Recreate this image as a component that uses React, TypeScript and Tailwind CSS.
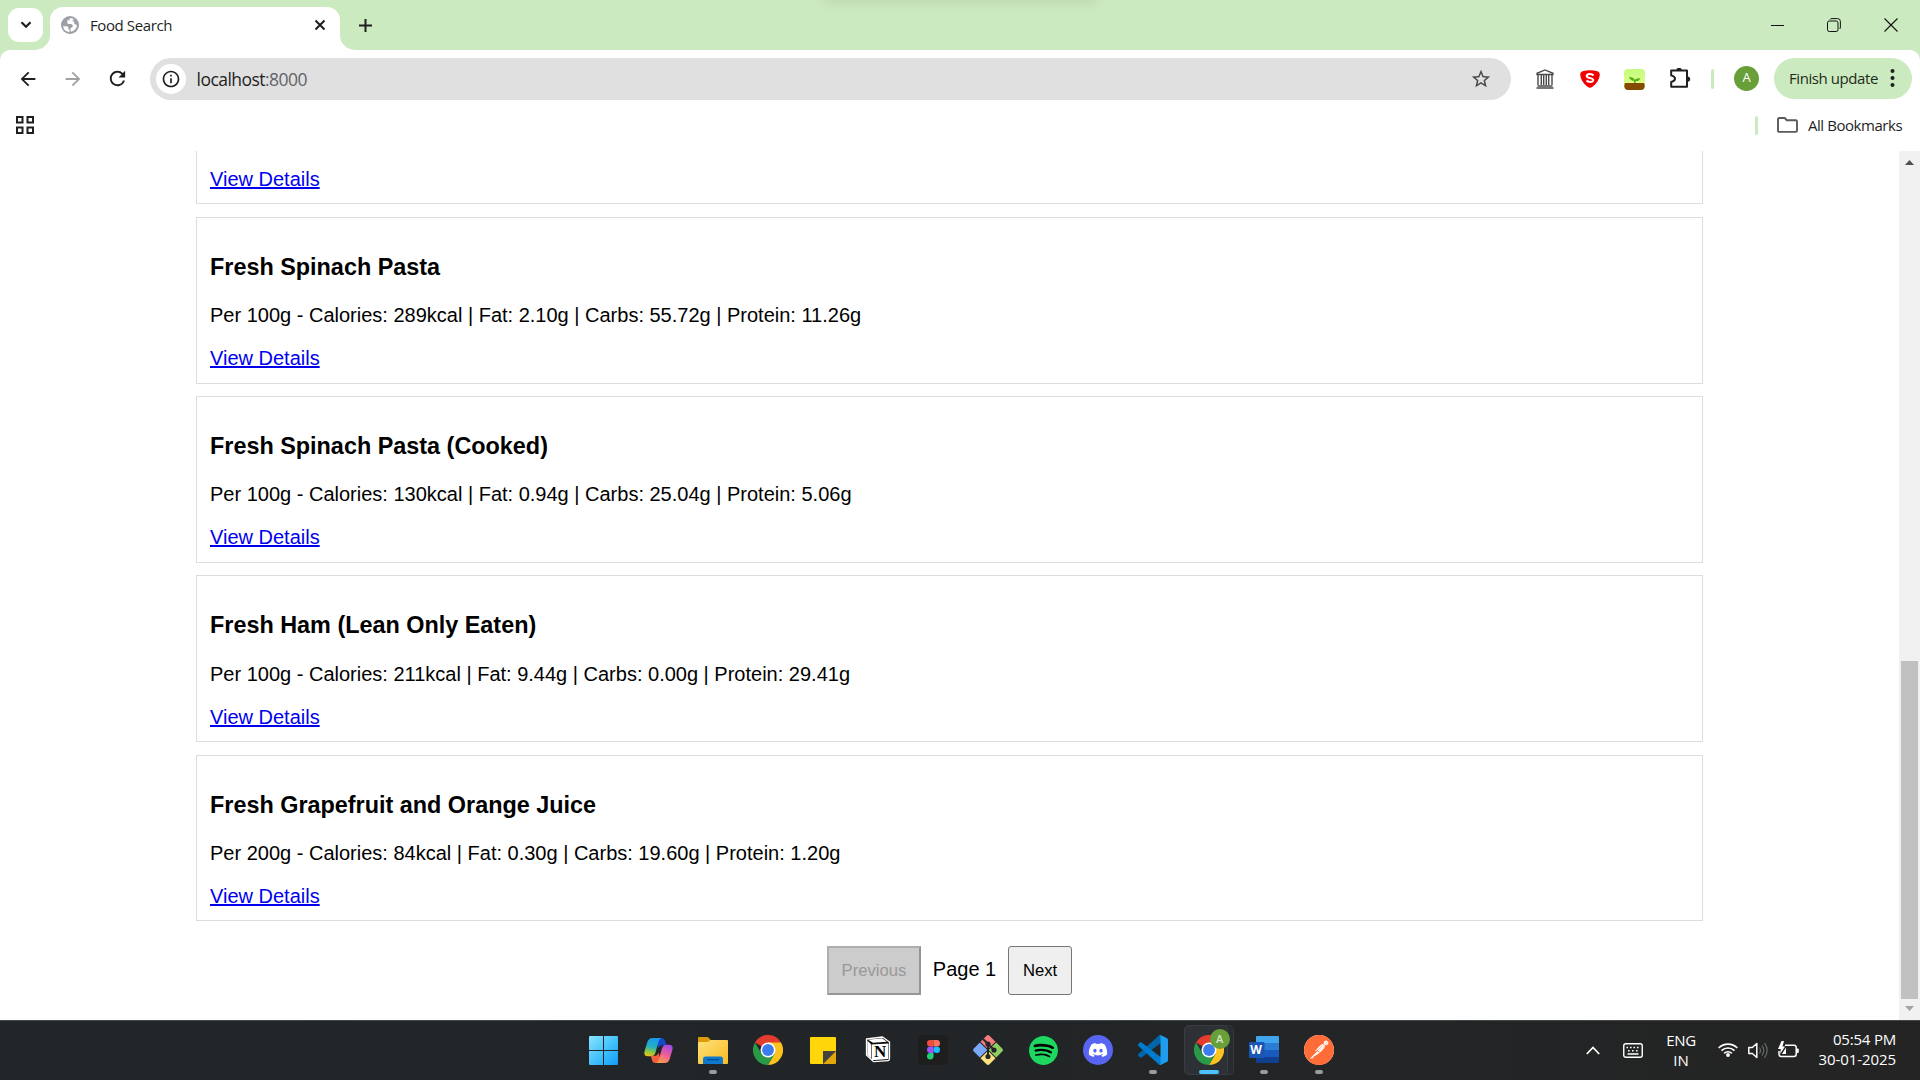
import React from "react";
import {
  MdArrowBack,
  MdArrowForward,
  MdRefresh,
  MdStarBorder,
  MdInfoOutline,
} from "react-icons/md";
import { SiSpotify, SiPostman } from "react-icons/si";
import { FaDiscord } from "react-icons/fa";

const foods = [
  { name: "Fresh Spinach Pasta", info: "Per 100g - Calories: 289kcal | Fat: 2.10g | Carbs: 55.72g | Protein: 11.26g" },
  { name: "Fresh Spinach Pasta (Cooked)", info: "Per 100g - Calories: 130kcal | Fat: 0.94g | Carbs: 25.04g | Protein: 5.06g" },
  { name: "Fresh Ham (Lean Only Eaten)", info: "Per 100g - Calories: 211kcal | Fat: 9.44g | Carbs: 0.00g | Protein: 29.41g" },
  { name: "Fresh Grapefruit and Orange Juice", info: "Per 200g - Calories: 84kcal | Fat: 0.30g | Carbs: 19.60g | Protein: 1.20g" },
];

function TabStrip() {
  return (
    <div className="relative flex h-[50px] shrink-0 bg-[#cbeabf] overflow-hidden">
      <div className="absolute left-[828px] -top-[10px] h-[8px] w-[266px] shadow-[0_2px_12px_2px_rgba(110,100,70,0.16)]" />
      <div className="ml-2 mt-2 flex h-[34px] w-[35px] items-center justify-center rounded-[11px] bg-white">
        <svg width="12" height="8" viewBox="0 0 12 8" fill="none" stroke="#1f1f1f" strokeWidth="2.200">
          <path d="M1.500 1.300 6 5.800l4.500-4.500" />
        </svg>
      </div>
      <div className="flex h-[50px] items-end">
        <svg className="-ml-[8px]" width="15" height="15" viewBox="0 0 15 15">
          <path d="M15 0v15H0A15 15 0 0 0 15 0z" fill="#fff" />
        </svg>
        <div className="flex h-[43px] w-[290px] items-center rounded-t-[13px] bg-white pb-[7px] pl-[11px] pr-[14px]">
          <svg width="18" height="18" viewBox="0 0 18 18">
            <circle cx="9" cy="9" r="9" fill="#9aa0a6" />
            <path d="M2 10.200h3.500c1.200 0 2 .9 2 2v1.300h1v2.600A7.200 7.200 0 0 1 2 10.200zM9.500 2c-1 .3-1 1.500-1 2.300H6.300v2.200c0 .9.800 1.500 1.800 1.500h1.500c1.400 0 2.200.9 2.200 2 0 1.200-1 1.900-2.400 1.900l.3 3.900c3.400-.6 6-3.300 6.300-6.500-.6-.7-1.600-1-2.700-1v-1.500c0-1-.8-1.700-1.900-1.700V4.500L13 3.300A7.200 7.200 0 0 0 9.500 2z" fill="#fff" />
          </svg>
          <span className="ml-[11px] flex-1 text-[15px] leading-[20px] tracking-[-0.400px] text-[#1f1f1f]">Food Search</span>
          <svg width="12" height="12" viewBox="0 0 12 12" stroke="#1f1f1f" strokeWidth="2">
            <path d="M1.500 1.500l9 9M10.500 1.500l-9 9" />
          </svg>
        </div>
        <svg width="15" height="15" viewBox="0 0 15 15">
          <path d="M0 0v15h15A15 15 0 0 1 0 0z" fill="#fff" />
        </svg>
      </div>
      <svg className="ml-[4px] mt-[19px]" width="13" height="13" viewBox="0 0 13 13" stroke="#1f1f1f" strokeWidth="2">
        <path d="M6.500 0v13M0 6.500h13" />
      </svg>
      <div className="ml-auto mr-[22px] flex h-[49px] items-center gap-[43px]">
        <svg width="13" height="14" viewBox="0 0 13 14">
          <path d="M0 7h13" stroke="#111" strokeWidth="1" shapeRendering="crispEdges" />
        </svg>
        <svg width="14" height="14" viewBox="0 0 14 14" fill="none" stroke="#111" strokeWidth="1">
          <rect x="0.500" y="3" width="10.500" height="10.500" rx="1.800" />
          <path d="M3 1.500 Q3.300.600 5 .600H10.500Q13.400.600 13.400 3.500V9Q13.400 10.600 12.500 11" />
        </svg>
        <svg width="14" height="14" viewBox="0 0 14 14" stroke="#111" strokeWidth="1.100">
          <path d="M.500.500l13 13M13.500.500l-13 13" />
        </svg>
      </div>
    </div>
  );
}

function Extensions() {
  return (
    <>
      <div className="flex w-[45px] justify-center">
        <svg width="18" height="20" viewBox="0 0 18 20" fill="none" stroke="#4a4a4a">
          <path d="M1 5.500V4.300L9 1l8 3.300v1.200z" strokeWidth="1.300" />
          <path d="M2 6v10M5.300 6v10M7.700 6v10M10.300 6v10M12.700 6v10M16 6v10" strokeWidth="1.400" />
          <path d="M1.500 17h15M.500 19h17" strokeWidth="1.500" />
        </svg>
      </div>
      <div className="flex w-[45px] justify-center">
        <svg width="20" height="18" viewBox="0 0 20 18">
          <path d="M2.500 1.300Q10-.9 17.500 1.300 20 2.200 19.800 5 19 12 12.500 16.800q-2.500 2-5 0Q1 12 .2 5 0 2.200 2.500 1.300z" fill="#f00000" />
          <path d="M13.500 5.500C12 3.800 7.500 3.300 6.700 5.600 6.200 8.600 13.500 7.600 13.200 10.200 12.700 12.600 8 12.200 6.500 10.500" fill="none" stroke="#fff" strokeWidth="2" />
        </svg>
      </div>
      <div className="flex w-[45px] justify-center">
        <svg width="21" height="21" viewBox="0 0 21 21">
          <defs>
            <linearGradient id="sky" x1="0" y1="0" x2="0" y2="1">
              <stop offset="0" stopColor="#c4fb7c" />
              <stop offset="1" stopColor="#e2ff8c" />
            </linearGradient>
          </defs>
          <rect width="21" height="19" rx="4" fill="url(#sky)" />
          <path d="M1 14h19q1.500 3 0 5.500-1 1.500-3 1.500H4q-2 0-3-1.500-1.500-2.500 0-5.500z" fill="#854b00" />
          <path d="M10 14v-2Q6 11.500 5 8q4.500-.2 5.500 2.800 1.500-2 6-1.600-1.300 3.200-5 3V14z" fill="#59ad16" />
        </svg>
      </div>
      <div className="flex w-[45px] justify-center">
        <svg className="translate-x-px -translate-y-px" width="21" height="20" viewBox="0 0 21 20">
          <path d="M1.200 2.600H17V18.700H1.200V14Q5 13 5 10.700 5 8.400 1.200 7.400z" fill="none" stroke="#1f1f1f" strokeWidth="2" strokeLinejoin="round" />
          <path d="M6.400 2.200a2.700 2.400 0 0 1 5.400 0zM17.500 8.400a2.700 2.700 0 0 1 0 5.400z" fill="#1f1f1f" />
        </svg>
      </div>
    </>
  );
}

function Toolbar() {
  return (
    <div className="shrink-0 bg-[#cbeabf]">
      <div className="flex h-[58px] items-center rounded-t-[10px] bg-white text-[#1f1f1f]">
        <MdArrowBack className="ml-[16.500px]" size={22} />
        <MdArrowForward className="ml-[23px] text-[#a0a0a0]" size={22} />
        <MdRefresh className="ml-[22px] -translate-y-px" size={23} />
        <div className="ml-[21px] flex h-[42px] w-[1361px] items-center rounded-full bg-[#e0e0e0] pl-[6px] pr-[19px]">
          <div className="flex size-[30px] items-center justify-center rounded-full bg-white">
            <MdInfoOutline size={20} />
          </div>
          <span className="ml-[11px] flex-1 text-[17.500px] leading-[24px] tracking-[-0.530px]">
            localhost<span className="text-[#5f6368]">:8000</span>
          </span>
          <MdStarBorder size={22} className="text-[#474747]" />
        </div>
        <div className="ml-[11.500px] flex items-center">
          <Extensions />
        </div>
        <div className="ml-[9px] h-5 w-[3px] rounded-full bg-[#cbeabf]" />
        <div className="ml-5 flex size-[25px] -translate-y-px items-center justify-center rounded-full bg-[#689f38] text-[13px] text-white">A</div>
        <div className="ml-[15px] flex h-[41px] w-[138px] -translate-y-px items-center rounded-full bg-[#cbeabf] pl-[15px]">
          <span className="w-[98px] whitespace-nowrap text-[15px] leading-[20px] tracking-[-0.420px] text-[#1f2a1a]">Finish update</span>
          <svg width="10" height="20" viewBox="0 0 10 20" fill="#1f1f1f">
            <circle cx="5.500" cy="3" r="2" />
            <circle cx="5.500" cy="10" r="2" />
            <circle cx="5.500" cy="17" r="2" />
          </svg>
        </div>
      </div>
      <div className="flex h-[43px] items-center bg-white pb-[9px]">
        <svg className="ml-[16px]" width="18" height="18" viewBox="0 0 18 18" fill="none" stroke="#1f1f1f" strokeWidth="2">
          <path d="M1 1h5.500v5.500H1zM11.500 1H17v5.500h-5.500zM1 11.500h5.500V17H1zM11.500 11.500H17V17h-5.500z" />
        </svg>
        <div className="ml-auto h-[19px] w-[3px] rounded-full bg-[#cbeabf]" />
        <svg className="ml-[19px]" width="21" height="16" viewBox="0 0 21 16" fill="none" stroke="#5a5a5a" strokeWidth="1.900">
          <path d="M1 13.500V2.300Q1 1 2.300 1H7.700L9.800 3.200H18.700Q20 3.200 20 4.500V13.500Q20 14.900 18.700 14.900H2.300Q1 14.900 1 13.500z" />
        </svg>
        <span className="ml-[10px] w-[112px] whitespace-nowrap text-[15px] leading-[20px] tracking-[-0.450px] text-[#1f1f1f]">All Bookmarks</span>
      </div>
    </div>
  );
}

function Details() {
  return (
    <a className="text-[20px] leading-[23px] text-[#0000ee] underline" href="#">
      View Details
    </a>
  );
}

function Page() {
  return (
    <div className="flex h-[869px] shrink-0 overflow-hidden bg-white font-['Liberation_Sans',Arial,sans-serif] text-black">
      <main className="ml-[196px] flex w-[1507px] flex-col">
        <div className="mb-[12.500px] flex h-[53.400px] shrink-0 flex-col border-x border-b border-[#dddddd] pl-[13px] pt-[16.750px]">
          <Details />
        </div>
        {foods.map((f) => (
          <div key={f.name} className="mb-[12.500px] flex h-[166.750px] shrink-0 flex-col border border-[#dddddd] pl-[13px] pt-[35.900px]">
            <h3 className="mb-[23.250px] text-[23.400px] font-bold leading-[27px]">{f.name}</h3>
            <p className="mb-5 text-[20px] leading-[23px]">{f.info}</p>
            <Details />
          </div>
        ))}
        <div className="mt-[12.100px] flex items-center justify-center">
          <button className="h-[49px] w-[94px] border-2 border-b-[#969696] border-l-[#afafaf] border-r-[#969696] border-t-[#afafaf] bg-[#cccccc] text-[16.670px] text-[#999999]" disabled>
            Previous
          </button>
          <span className="w-[87px] pb-[2px] text-center text-[20px] leading-[23px]">Page 1</span>
          <button className="h-[49px] w-[64px] rounded-[3px] border border-[#767676] bg-[#efefef] text-[16.670px]">Next</button>
        </div>
      </main>
      <div className="ml-auto flex w-[21px] flex-col items-center bg-[#f1f1f1]">
        <svg className="mt-[9px]" width="9" height="5" viewBox="0 0 9 5">
          <path d="M0 5 4.500 0 9 5z" fill="#505050" />
        </svg>
        <div className="mt-[496px] h-[338px] w-[17px] bg-[#c1c1c1]" />
        <svg className="mt-[7px]" width="9" height="5" viewBox="0 0 9 5">
          <path d="M0 0h9L4.500 5z" fill="#a3a3a3" />
        </svg>
      </div>
    </div>
  );
}

function Chrome() {
  return (
    <svg width="30" height="30" viewBox="0 0 48 48">
      <path d="M24 24 3.200 12A24 24 0 0 1 44.800 12z" fill="#e33b2e" />
      <path d="M24 12H44.800A24 24 0 0 1 24 48L34.400 30z" fill="#fcc31e" />
      <path d="M13.600 30 3.200 12A24 24 0 0 0 24 48L34.400 30z" fill="#2a9a48" />
      <circle cx="24" cy="24" r="12" fill="#fff" />
      <circle cx="24" cy="24" r="9.500" fill="#3b7ded" />
    </svg>
  );
}

const WindowsLogo = () => (
  <svg width="29" height="29" viewBox="0 0 29 29">
    <defs>
      <linearGradient id="win" x1="0" y1="0" x2="1" y2="1">
        <stop offset="0" stopColor="#8be3ff" />
        <stop offset="0.500" stopColor="#46c4fb" />
        <stop offset="1" stopColor="#0f9af5" />
      </linearGradient>
    </defs>
    <path d="M1 0h13v14H0V1q0-1 1-1zM15 0h13q1 0 1 1v13H15zM0 15h14v14H1q-1 0-1-1zM15 15h14v13q0 1-1 1H15z" fill="url(#win)" />
  </svg>
);

const Copilot = () => (
  <svg width="29" height="27" viewBox="0 0 30 28">
    <defs>
      <linearGradient id="cpa" x1="0.400" y1="0" x2="0.200" y2="1">
        <stop offset="0" stopColor="#1a9bea" />
        <stop offset="0.450" stopColor="#21b0c4" />
        <stop offset="0.750" stopColor="#8fc63f" />
        <stop offset="1" stopColor="#f2c211" />
      </linearGradient>
      <linearGradient id="cpb" x1="0.700" y1="0" x2="0.300" y2="1">
        <stop offset="0" stopColor="#a04be8" />
        <stop offset="0.500" stopColor="#ee5c9c" />
        <stop offset="1" stopColor="#fb9a4b" />
      </linearGradient>
    </defs>
    <path d="M12 1h6q3 0 4 3l1.200 4.500H19q-3 0-4 3z" fill="#1747c9" />
    <path d="M8.500 1H18q-2 .5-3 4l-3 10.500q-1 4.500-5 4.500H4q-4.500 0-3.500-5L3.500 5Q5 1 8.500 1z" fill="url(#cpa)" />
    <path d="M7 19.500h4q3 0 4-3.500L17.500 25q-1 2-4.500 2h-1.500q-2.300 0-3-2.500z" fill="#f0603e" />
    <path d="M21.500 27H12.500q2-.5 3-4L18.500 12.500q1-4.500 5-4.500H26q4.500 0 3.500 5L26.500 23q-1.500 4-5 4z" fill="url(#cpb)" />
  </svg>
);

const Explorer = () => (
  <svg width="30" height="27" viewBox="0 0 30 27">
    <defs>
      <linearGradient id="fol" x1="0" y1="0" x2="1" y2="1">
        <stop offset="0" stopColor="#ffe07a" />
        <stop offset="1" stopColor="#f9bd22" />
      </linearGradient>
    </defs>
    <path d="M1 0h8q1 0 2 1l2 2.500H29q1 0 1 1V10H0V1q0-1 1-1z" fill="#dd9b0b" />
    <path d="M0 6Q0 5 1 5h8.500l3-2H29q1 0 1 1v22q0 1-1 1H1q-1 0-1-1z" fill="url(#fol)" />
    <path d="M5 27v-5q0-2.500 2.500-2.500h15q2.500 0 2.500 2.500v5z" fill="#0f78cc" />
    <path d="M9 22.700h12" stroke="#084a8c" strokeWidth="1.200" />
  </svg>
);

const Notes = () => (
  <svg width="26" height="27" viewBox="0 0 26 27">
    <path d="M1 0h24q1 0 1 1v13L13 27H1q-1 0-1-1V1q0-1 1-1z" fill="#ffd60a" />
    <path d="M26 14v12q0 1-1 1H13z" fill="#e0a80a" />
    <path d="M13 14h13L13 27z" fill="#44423d" />
  </svg>
);

const Notion = () => (
  <div className="relative flex h-[28px] w-[26px] items-center justify-center">
    <svg className="absolute left-0 top-0" width="26" height="27" viewBox="0 0 26 27">
      <path d="M1.500 3 17.500 1 24.500 6V22.500Q24.500 24.500 23 24.600L8.500 25.600 1.500 19z" fill="#0c0c0c" stroke="#fff" strokeWidth="1.300" strokeLinejoin="round" />
      <path d="M3 3.800 17 2.300 22 5.800 8 6.800zM6.600 8.600 23.400 7.400V23L6.600 24.200z" fill="#fff" />
      <path d="M2.300 4.500 6 8.300V22.500L2.300 18.700z" fill="#fff" />
    </svg>
    <span className="absolute left-[6px] top-[8px] w-[18px] text-center font-['Liberation_Serif',serif] text-[17px] font-bold leading-[16px] text-black">N</span>
  </div>
);

const Figma = () => (
  <div className="flex size-[30px] items-center justify-center rounded-[4px] bg-[#1e1e1e]">
    <svg width="13" height="20" viewBox="0 0 26 40">
      <path d="M6.500 0H13v13H6.500a6.500 6.500 0 0 1 0-13z" fill="#f24e3e" />
      <path d="M13 0h6.500a6.500 6.500 0 0 1 0 13H13z" fill="#ff7262" />
      <path d="M6.500 13H13v13H6.500a6.500 6.500 0 0 1 0-13z" fill="#9b55fa" />
      <circle cx="19.500" cy="19.500" r="6.500" fill="#1abcfe" />
      <path d="M6.500 26H13v6.500A6.500 6.500 0 1 1 6.500 26z" fill="#1fce75" />
    </svg>
  </div>
);

const Git = () => (
  <svg width="30" height="30" viewBox="0 0 30 30">
    <path d="M13.500.8q1.500-1.500 3 0l6 6-7.500 7.500-7.500-7.500z" fill="#f47c7c" />
    <path d="M23.200 7.500l6 6q1.500 1.500 0 3l-6 6L15.700 15z" fill="#8ecf5f" />
    <path d="M6.800 7.500 14.300 15l-7.500 7.500-6-6q-1.500-1.500 0-3z" fill="#7aa8f5" />
    <path d="M15 15.700l7.500 7.500-6 6q-1.500 1.500-3 0l-6-6z" fill="#fbe07c" />
    <g stroke="#24252a" strokeWidth="2" fill="#24252a">
      <path d="M10 4l5 5v12M15 9l6 6" fill="none" />
      <circle cx="15" cy="9" r="1.600" />
      <circle cx="21" cy="15" r="1.600" />
      <circle cx="15" cy="21.500" r="1.600" />
    </g>
  </svg>
);

const Spotify = () => (
  <div className="flex size-[29px] items-center justify-center rounded-full bg-black">
    <SiSpotify size={29} className="text-[#1ed760]" />
  </div>
);

const Discord = () => (
  <div className="flex size-[30px] items-center justify-center rounded-full bg-[#5865f2]">
    <FaDiscord size={20} className="text-white" />
  </div>
);

const Code = () => (
  <svg width="30" height="30" viewBox="0 0 100 100">
    <path d="M96.500 10.800 75.900.9a6.200 6.200 0 0 0-7.100 1.200L1.300 63.600a4.200 4.200 0 0 0 0 6.200l5.500 5a4.200 4.200 0 0 0 5.300.2l81.200-61.600c2.700-2 6.700-.1 6.700 3.300v-.2c0-2.400-1.400-4.600-3.500-5.700z" fill="#0065a9" />
    <path d="M96.500 89.200l-20.600 9.900a6.200 6.200 0 0 1-7.100-1.200L1.300 36.400a4.200 4.200 0 0 1 0-6.200l5.500-5a4.200 4.200 0 0 1 5.300-.2l81.200 61.600c2.700 2 6.700.1 6.700-3.300v.2c0 2.400-1.400 4.600-3.500 5.700z" fill="#007acc" />
    <path d="M75.900 99.100a6.200 6.200 0 0 1-7.100-1.200c2.300 2.300 6.200.7 6.200-2.600V4.700c0-3.300-3.900-4.900-6.200-2.600A6.200 6.200 0 0 1 75.900.9l20.600 9.900c2.100 1.100 3.500 3.300 3.500 5.700v67c0 2.400-1.400 4.600-3.500 5.700z" fill="#1f9cf0" />
  </svg>
);

const ActiveChrome = () => (
  <div className="relative flex h-[50px] w-[50px] items-center justify-center">
    <div className="absolute left-0 top-0 h-[50px] w-[50px] rounded-[5px] border border-[#34383c] bg-[#282c30]" />
    <div className="absolute left-0 top-0 h-[50px] w-[44px] rounded-[5px] border border-[#393d42] bg-[#2d3136]" />
    <div className="relative flex">
      <Chrome />
    </div>
    <div className="absolute left-[26px] top-[4px] flex size-[20px] items-center justify-center rounded-full bg-[#689f38] text-[11px] font-semibold text-[#d7e6c8]">A</div>
  </div>
);

const Word = () => (
  <div className="relative flex h-[28px] w-[30px]">
    <svg width="30" height="28" viewBox="0 0 30 28">
      <path d="M7 1q0-1 1-1h21q1 0 1 1v6H7z" fill="#41a5ee" />
      <path d="M7 7h23v7H7z" fill="#2b7cd3" />
      <path d="M7 14h23v7H7z" fill="#185abd" />
      <path d="M7 21h23v5q0 1-1 1H8q-1 0-1-1z" fill="#103f91" />
      <rect y="6" width="15.500" height="16" rx="1.300" fill="#1a55b5" />
    </svg>
    <span className="absolute left-0 top-[6px] w-[15px] text-center text-[12px] font-bold leading-[16px] text-white">W</span>
  </div>
);

const Postman = () => (
  <div className="flex size-[30px] items-center justify-center rounded-full bg-white">
    <SiPostman size={30} className="text-[#ff6c37]" />
  </div>
);

const apps: { Icon: () => React.JSX.Element; state?: "open" | "active" }[] = [
  { Icon: WindowsLogo },
  { Icon: Copilot },
  { Icon: Explorer, state: "open" },
  { Icon: Chrome },
  { Icon: Notes },
  { Icon: Notion },
  { Icon: Figma },
  { Icon: Git },
  { Icon: Spotify },
  { Icon: Discord },
  { Icon: Code, state: "open" },
  { Icon: ActiveChrome, state: "active" },
  { Icon: Word, state: "open" },
  { Icon: Postman, state: "open" },
];

function Taskbar() {
  return (
    <footer className="flex h-[60px] shrink-0 border-t border-[#43474a] bg-linear-to-r from-[#20262a] to-[#242424] text-white">
      <div className="ml-[575.500px] flex">
        {apps.map(({ Icon, state }, i) => (
          <div key={i} className="relative flex h-[58px] w-[55.060px] items-center justify-center">
            <Icon />
            {state === "open" && <div className="absolute bottom-[5px] h-[4px] w-2 rounded-full bg-[#9a9b9d]" />}
            {state === "active" && <div className="absolute bottom-[5px] h-[4px] w-5 rounded-full bg-[#4cc2ff]" />}
          </div>
        ))}
      </div>
      <div className="ml-auto mr-[24px] flex h-[58px] items-center text-[15px]">
        <svg width="14" height="9" viewBox="0 0 14 9" fill="none" stroke="#fff" strokeWidth="1.700">
          <path d="M.800 8 7 1.500 13.200 8" />
        </svg>
        <svg className="ml-[23px]" width="20" height="15" viewBox="0 0 20 15" fill="none" stroke="#fff">
          <rect x="0.750" y="0.750" width="18.500" height="13.500" rx="2" strokeWidth="1.400" />
          <path d="M3.500 4.500h1.600m1.900 0h1.600m1.900 0h1.600m1.900 0h1.600M5 7.700h1.600m2.400 0h1.600m2.400 0h1.600M4.500 11h11" strokeWidth="1.500" />
        </svg>
        <div className="ml-[20px] flex w-[36px] flex-col items-center leading-[20px]">
          <span className="tracking-[-0.300px]">ENG</span>
          <span>IN</span>
        </div>
        <svg className="ml-[19px] -translate-y-px" width="20" height="15" viewBox="0 0 20 15" fill="none" stroke="#fff" strokeWidth="1.700">
          <path d="M.700 6A13 13 0 0 1 19.300 6M3.500 8.700a9.200 9.200 0 0 1 13 0M6.200 11.300a5.400 5.400 0 0 1 7.600 0" />
          <circle cx="10" cy="13" r="1.900" fill="#fff" stroke="none" />
        </svg>
        <svg className="ml-[10px]" width="20" height="17" viewBox="0 0 20 17" fill="none" strokeWidth="1.500">
          <path d="M.800 5.500h3.500L8.800 1.500v14L4.300 11.500H.800z" stroke="#fff" strokeLinejoin="round" />
          <path d="M11.500 5.500q2 3 0 6M14 3.500q3.500 5 0 10M16.500 1.200q5.300 7.300 0 14.600" stroke="#66696b" strokeWidth="1.200" />
        </svg>
        <svg className="ml-[10px] -translate-y-px" width="21" height="17" viewBox="0 0 21 17">
          <path d="M7 4.200h9q2.200 0 2.200 2.200v6.800q0 2.200-2.200 2.200H3.200Q1 15.400 1 13.200V10" fill="none" stroke="#fff" strokeWidth="1.500" />
          <path d="M18.500 7.500h1.300q1 0 1 1v2.600q0 1-1 1h-1.300zM3.500 0 0 8h2.800L2 13l5-7.500H4.500L6 0zM8 6.500V13H4z" fill="#fff" />
        </svg>
        <div className="ml-[18px] flex w-[79px] flex-col items-end whitespace-nowrap pb-[3px] leading-[20px]">
          <span className="tracking-[-0.200px]">05:54 PM</span>
          <span className="tracking-[-0.080px]">30-01-2025</span>
        </div>
      </div>
    </footer>
  );
}

export default function App() {
  return (
    <div className="flex h-[1080px] w-[1920px] flex-col overflow-hidden bg-white font-['Open_Sans','Noto_Sans',sans-serif]">
      <TabStrip />
      <Toolbar />
      <Page />
      <Taskbar />
    </div>
  );
}
